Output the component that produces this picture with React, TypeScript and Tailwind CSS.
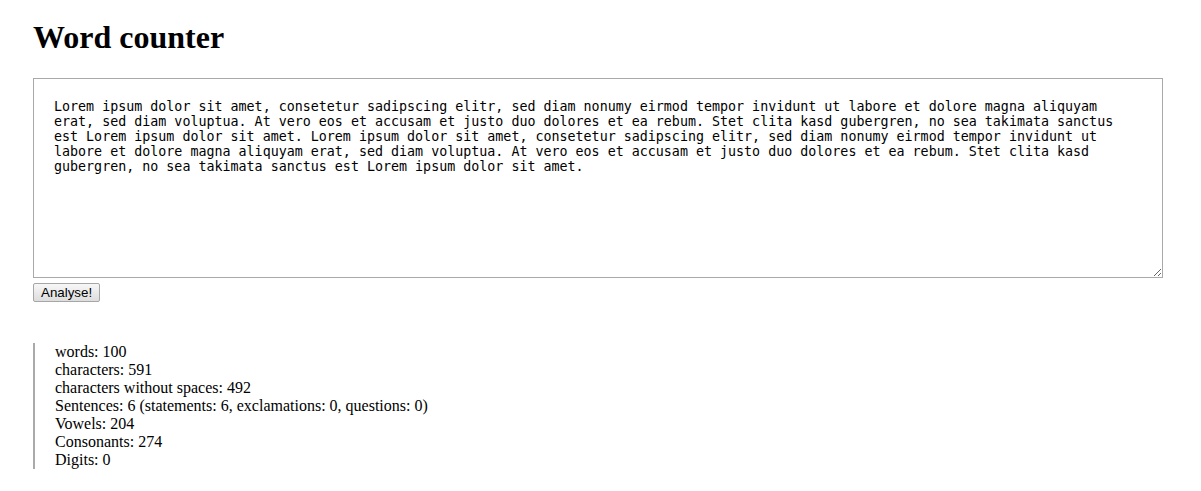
import { useState } from 'react';

const sampleText =
  'Lorem ipsum dolor sit amet, consetetur sadipscing elitr, sed diam nonumy eirmod tempor invidunt ut labore et dolore magna aliquyam erat, sed diam voluptua. At vero eos et accusam et justo duo dolores et ea rebum. Stet clita kasd gubergren, no sea takimata sanctus est Lorem ipsum dolor sit amet. Lorem ipsum dolor sit amet, consetetur sadipscing elitr, sed diam nonumy eirmod tempor invidunt ut labore et dolore magna aliquyam erat, sed diam voluptua. At vero eos et accusam et justo duo dolores et ea rebum. Stet clita kasd gubergren, no sea takimata sanctus est Lorem ipsum dolor sit amet.';

type TStats = {
  words: number;
  chars: number;
  charsNoSpaces: number;
  sentences: number;
  statements: number;
  exclamations: number;
  questions: number;
  vowels: number;
  consonants: number;
  digits: number;
};

const analyse = (text: string): TStats => {
  const words = text.trim().split(/\s+/).filter(Boolean).length;
  const statements = (text.match(/\./g) || []).length;
  const exclamations = (text.match(/!/g) || []).length;
  const questions = (text.match(/\?/g) || []).length;
  return {
    words,
    chars: text.length,
    charsNoSpaces: text.replace(/\s/g, '').length,
    sentences: statements + exclamations + questions,
    statements,
    exclamations,
    questions,
    vowels: (text.match(/[aeiou]/gi) || []).length,
    consonants: (text.match(/[b-df-hj-np-tv-z]/gi) || []).length,
    digits: (text.match(/[0-9]/g) || []).length,
  };
};

const App = () => {
  const [text, setText] = useState(sampleText);
  const [stats, setStats] = useState<TStats>(analyse(sampleText));

  return (
    <div className="min-h-screen bg-white pl-[33px] pr-[38px] pt-[19px] text-black font-['Liberation_Serif',serif]">
      <h1 className="text-[32px] font-bold leading-[37px]">Word counter</h1>
      <textarea
        value={text}
        onChange={(e) => setText(e.target.value)}
        className="mt-[22px] block w-full h-[200px] border border-[#a9a9a9] p-5 text-[13.33px] leading-[15px] font-['DejaVu_Sans_Mono',monospace] outline-none"
      />
      <button
        onClick={() => setStats(analyse(text))}
        className="mt-[5px] block h-[19px] px-[7px] rounded-[2px] border border-[#a6a6a6] bg-gradient-to-b from-[#f7f7f7] to-[#dddddd] text-[13.33px] leading-[15px] font-['Liberation_Sans',sans-serif]"
      >
        Analyse!
      </button>
      <div className="mt-[41px] border-l-2 border-[#aaaaaa] pl-5 text-[16px] leading-[18px]">
        <div>words: {stats.words}</div>
        <div>characters: {stats.chars}</div>
        <div>characters without spaces: {stats.charsNoSpaces}</div>
        <div>
          Sentences: {stats.sentences} (statements: {stats.statements}, exclamations: {stats.exclamations}, questions: {stats.questions})
        </div>
        <div>Vowels: {stats.vowels}</div>
        <div>Consonants: {stats.consonants}</div>
        <div>Digits: {stats.digits}</div>
      </div>
    </div>
  );
};

export default App;
